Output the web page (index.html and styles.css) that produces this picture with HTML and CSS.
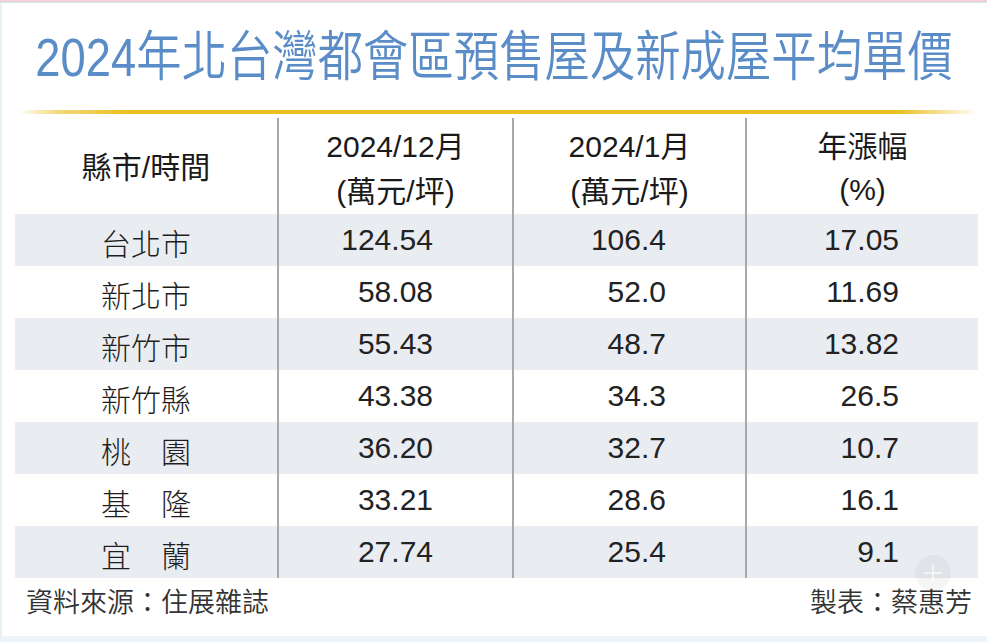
FILE: index.html
```html
<!DOCTYPE html>
<html lang="zh-Hant">
<head>
<meta charset="utf-8">
<title>2024年北台灣都會區預售屋及新成屋平均單價</title>
<link rel="stylesheet" href="styles.css">
</head>
<body>
<main class="page">
  <header class="title-wrap">
    <h1 class="title">2024年北台灣都會區預售屋及新成屋平均單價</h1>
  </header>
  <div class="rule"></div>
  <section class="table">
    <div class="cell head first"><span class="cj">縣市</span>/<span class="cj">時間</span></div>
    <div class="cell head">2024/12<span class="cj">月</span><br>(<span class="cj">萬元</span>/<span class="cj">坪</span>)</div>
    <div class="cell head">2024/1<span class="cj">月</span><br>(<span class="cj">萬元</span>/<span class="cj">坪</span>)</div>
    <div class="cell head"><span class="cj">年漲幅</span><br>(%)</div>

    <div class="row band">
      <div class="cell name">台北市</div><div class="cell num">124.54</div><div class="cell num">106.4</div><div class="cell num">17.05</div>
    </div>
    <div class="row">
      <div class="cell name">新北市</div><div class="cell num">58.08</div><div class="cell num">52.0</div><div class="cell num">11.69</div>
    </div>
    <div class="row band">
      <div class="cell name">新竹市</div><div class="cell num">55.43</div><div class="cell num">48.7</div><div class="cell num">13.82</div>
    </div>
    <div class="row">
      <div class="cell name">新竹縣</div><div class="cell num">43.38</div><div class="cell num">34.3</div><div class="cell num">26.5</div>
    </div>
    <div class="row band">
      <div class="cell name">桃　園</div><div class="cell num">36.20</div><div class="cell num">32.7</div><div class="cell num">10.7</div>
    </div>
    <div class="row">
      <div class="cell name">基　隆</div><div class="cell num">33.21</div><div class="cell num">28.6</div><div class="cell num">16.1</div>
    </div>
    <div class="row band">
      <div class="cell name">宜　蘭</div><div class="cell num">27.74</div><div class="cell num">25.4</div><div class="cell num">9.1</div>
    </div>
  </section>
  <footer class="foot">
    <span>資料來源：住展雜誌</span>
    <span>製表：蔡惠芳</span>
  </footer>
  <div class="zoom-btn" aria-hidden="true">
    <svg width="36" height="36" viewBox="0 0 36 36"><circle cx="18" cy="18" r="18" fill="rgba(120,120,120,0.07)"/><path d="M18 9v18M9 18h18" stroke="rgba(255,255,255,0.6)" stroke-width="2"/></svg>
  </div>
</main>
</body>
</html>
```
FILE: styles.css
```css
html, body {
  margin: 0;
  padding: 0;
  background: #fff;
}
body {
  width: 987px;
  height: 642px;
  overflow: hidden;
  font-family: "Liberation Sans", "Noto Sans CJK TC", sans-serif;
  color: #222;
  border-top: 2px solid #f2d2d9;
  box-sizing: border-box;
}
.page {
  position: relative;
  box-sizing: border-box;
  height: 640px;
  border-top: 1px solid #d3e4ee;
  border-left: 2px solid #e6f2f7;
  border-bottom: 6px solid #eef5fa;
}
.title-wrap {
  height: 104px;
  display: flex;
  justify-content: center;
  align-items: flex-start;
}
.title {
  margin: 24px 0 0;
  font-size: 54px;
  line-height: 60px;
  font-weight: 350;
  color: #5a8cc7;
  white-space: nowrap;
  transform: scaleX(0.84);
  transform-origin: center;
}
.rule {
  height: 4px;
  margin: 3px 7px 0 16px;
  background: linear-gradient(90deg, rgba(234,192,34,0) 0, rgba(234,192,34,0.6) 40px, #e9bf22 110px, #e9bf22 880px, rgba(234,192,34,0) 960px);
}
.table {
  margin: 4px 7px 0 13px;
  display: grid;
  grid-template-columns: 262px 235px 233px 233px;
}
.row {
  display: contents;
}
.cell {
  box-sizing: border-box;
  border-left: 2px solid #a9a9a9;
  height: 52px;
  display: flex;
  align-items: center;
  font-size: 30px;
  font-weight: 400;
}
.cell.first, .cell.name {
  border-left: none;
}
.head {
  display: block;
  height: 96px;
  text-align: center;
  line-height: 43px;
  color: #1a1a1a;
  padding-top: 5px;
}
.head.first {
  padding-top: 26px;
}
.head .cj {
  font-family: "Noto Sans CJK TC", sans-serif;
  font-weight: 400;
}
.name {
  justify-content: center;
  padding-top: 3px;
  font-weight: 300;
  color: #1e1e1e;
}
.num {
  justify-content: flex-end;
  padding-right: 79px;
}
.band .cell {
  background: #e9edf2;
}
.foot {
  display: flex;
  justify-content: space-between;
  padding: 8px 15px 0 24px;
  font-size: 27px;
  line-height: 34px;
  color: #333;
  font-weight: 350;
}
.zoom-btn {
  position: absolute;
  left: 913px;
  top: 552px;
  width: 36px;
  height: 36px;
}
.zoom-btn svg {
  display: block;
}
```
